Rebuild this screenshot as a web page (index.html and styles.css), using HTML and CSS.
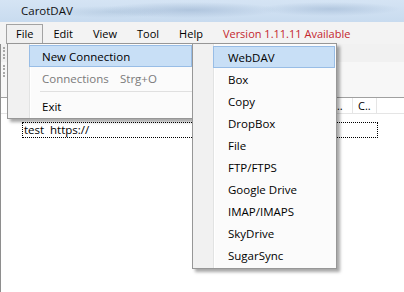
FILE: index.html
```html
<!DOCTYPE html>
<html lang="en">
<head>
    <meta charset="UTF-8">
    <title>CarotDAV</title>
    <link rel="stylesheet" href="styles.css">
</head>
<body>
    <div class="window">
        <div class="titlebar">CarotDAV</div>

        <div class="menubar">
            <div class="menu-item open">File</div>
            <div class="menu-item">Edit</div>
            <div class="menu-item">View</div>
            <div class="menu-item">Tool</div>
            <div class="menu-item">Help</div>
            <div class="menu-item update">Version 1.11.11 Available</div>
        </div>

        <div class="content">
            <div class="toolbar"><span class="grip"></span></div>
            <div class="address"><span class="grip"></span></div>
            <div class="list">
                <div class="list-header">
                    <div class="col col-name"></div>
                    <div class="col col-url"></div>
                    <div class="col col-user"></div>
                    <div class="col col-date"></div>
                    <div class="col col-small">...</div>
                    <div class="col col-small">C..</div>
                </div>
                <div class="list-row">
                    <span class="cell-name">test</span>
                    <span class="cell-url">https://</span>
                </div>
            </div>
        </div>

        <!-- File dropdown -->
        <div class="dropdown file-menu">
            <div class="entry active">New Connection</div>
            <div class="entry disabled"><span class="label">Connections</span>Strg+O</div>
            <div class="separator"></div>
            <div class="entry">Exit</div>
        </div>

        <!-- New Connection submenu -->
        <div class="dropdown sub-menu">
            <div class="entry active">WebDAV</div>
            <div class="entry">Box</div>
            <div class="entry">Copy</div>
            <div class="entry">DropBox</div>
            <div class="entry">File</div>
            <div class="entry">FTP/FTPS</div>
            <div class="entry">Google Drive</div>
            <div class="entry">IMAP/IMAPS</div>
            <div class="entry">SkyDrive</div>
            <div class="entry">SugarSync</div>
        </div>
    </div>
</body>
</html>
```

FILE: styles.css
```css
body {
    margin: 0;
    font-family: "Open Sans", sans-serif;
    font-size: 11.5px;
    color: #000;
    background-color: #fff;
    overflow: hidden;
}

.window {
    position: relative;
    width: 404px;
    height: 292px;
}

.titlebar {
    height: 22px;
    line-height: 22px;
    padding-left: 21px;
    color: #111;
    background:
        radial-gradient(ellipse 90px 8px at 190px 10px, rgba(150, 175, 205, 0.55), transparent),
        radial-gradient(ellipse 70px 7px at 330px 9px, rgba(150, 175, 205, 0.5), transparent),
        radial-gradient(ellipse 60px 6px at 110px 12px, rgba(160, 185, 210, 0.4), transparent),
        linear-gradient(#d5e4f4, #c8dbef);
}

.menubar {
    display: flex;
    height: 22px;
    padding-left: 6px;
    font-size: 11px;
    background-color: #f3f3f3;
    box-sizing: border-box;
}

.menu-item {
    height: 20px;
    margin-top: 2px;
    padding: 0 9px;
    line-height: 18px;
    border: 1px solid transparent;
    border-bottom: none;
}

.menu-item.open {
    border-color: #a3a3a3;
    background-color: #f0f0f0;
}

.menu-item.update {
    color: #c4262e;
}

.content {
    display: flex;
    flex-direction: column;
    height: 248px;
    border-left: 1px solid #8e8e8e;
}

.toolbar {
    height: 18px;
    background-color: #f1f1f1;
}

.address {
    height: 35px;
    background-color: #f7f7f7;
}

.grip {
    display: block;
    width: 0;
    height: 12px;
    margin: 3px 0 0 2px;
    border-left: 2px dotted #a8a8a8;
}

.list {
    flex: 1;
    border-top: 1px solid #a0a0a0;
    background-color: #fff;
}

.list-header {
    display: flex;
    height: 15px;
    border-bottom: 1px solid #e5e5e5;
    line-height: 15px;
    font-size: 11px;
}

.col {
    padding-left: 5px;
    border-right: 1px solid #e5e5e5;
    box-sizing: border-box;
    overflow: hidden;
    white-space: nowrap;
}

.col-name { width: 46px; }
.col-url { width: 140px; }
.col-user { width: 70px; }
.col-date { width: 72px; }
.col-small { width: 24px; }

.list-row {
    display: flex;
    width: 356px;
    height: 16px;
    margin: 8px 0 0 21px;
    line-height: 14px;
    border: 1px dotted #000;
    box-sizing: border-box;
}

.cell-name {
    width: 26px;
    padding-left: 1px;
}

.dropdown {
    position: absolute;
    padding: 1px 0;
    border: 1px solid #979797;
    box-sizing: border-box;
    box-shadow: 3px 3px 3px rgba(0, 0, 0, 0.35);
}

.file-menu {
    left: 7px;
    top: 43px;
    width: 186px;
    background: linear-gradient(to right, #f1f1f1 21px, #e2e3e3 21px, #e2e3e3 22px, #fff 22px, #fff 23px, #fbfbfb 23px);
}

.sub-menu {
    left: 192px;
    top: 43px;
    width: 145px;
    padding: 2px 0;
    background: linear-gradient(to right, #f1f1f1 20px, #e2e3e3 20px, #e2e3e3 21px, #fff 21px, #fff 22px, #fbfbfb 22px);
}

.entry {
    height: 22px;
    line-height: 22px;
    border: 1px solid transparent;
    box-sizing: border-box;
    white-space: nowrap;
}

.file-menu .entry {
    margin-left: 21px;
    padding-left: 12px;
}

.sub-menu .entry {
    margin: 0 1px 0 20px;
    padding-left: 14px;
}

.entry.active {
    border-color: #98bde6;
    background-color: #c8dff6;
}

.entry.disabled {
    color: #7a7a7a;
}

.entry .label {
    display: inline-block;
    width: 78px;
}

.separator {
    height: 6px;
    margin-left: 32px;
    background: linear-gradient(#e0e0e0, #e0e0e0) 0 2px / 100% 1px no-repeat;
}
```
